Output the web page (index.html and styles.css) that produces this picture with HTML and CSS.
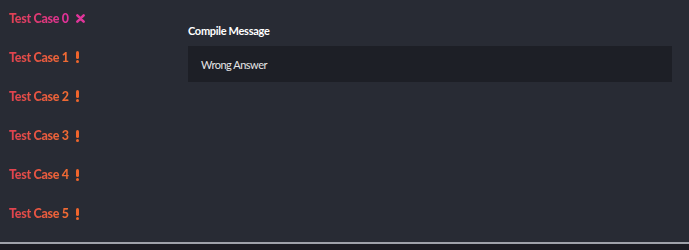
FILE: index.html
```html
<!DOCTYPE html>
<html>
<head>
<meta charset="utf-8">
<link rel="stylesheet" href="styles.css">
</head>
<body>
<div class="main">
  <ul class="cases">
    <li class="case"><span class="label fail">Test Case 0</span><svg class="xicon" viewBox="0 0 10 10" width="9" height="9"><path d="M1.5 1.5 L8.5 8.5 M8.5 1.5 L1.5 8.5" stroke="#e0359a" stroke-width="2.8" stroke-linecap="round"/></svg></li>
    <li class="case"><span class="label warn">Test Case 1</span><span class="bang"></span></li>
    <li class="case"><span class="label warn">Test Case 2</span><span class="bang"></span></li>
    <li class="case"><span class="label warn">Test Case 3</span><span class="bang"></span></li>
    <li class="case"><span class="label warn">Test Case 4</span><span class="bang"></span></li>
    <li class="case"><span class="label warn">Test Case 5</span><span class="bang"></span></li>
  </ul>
  <section class="result">
    <h3 class="title">Compile Message</h3>
    <div class="box">Wrong Answer</div>
  </section>
</div>
<div class="footer"></div>
</body>
</html>
```
FILE: styles.css
```css
html, body {
  margin: 0;
  padding: 0;
  background: #282b34;
  font-family: Lato, "Noto Sans", sans-serif;
}
.main {
  height: 242px;
  display: flex;
  background: #282b34;
}
.cases {
  list-style: none;
  margin: 0;
  padding: 9px 0 0 9px;
  width: 179px;
  box-sizing: border-box;
  display: flex;
  flex-direction: column;
  gap: 21.2px;
}
.case {
  display: flex;
  align-items: center;
  height: 18px;
  gap: 7px;
}
.label {
  font-size: 12.5px;
  font-weight: 900;
  letter-spacing: -0.3px;
  -webkit-background-clip: text;
  background-clip: text;
  color: transparent;
}
.fail {
  background-image: linear-gradient(90deg, #e04250, #e0309c);
}
.warn {
  background-image: linear-gradient(90deg, #df4150, #f06c32);
}
.xicon {
  display: block;
}
.bang {
  position: relative;
  width: 3px;
  height: 12px;
}
.bang::before {
  content: "";
  position: absolute;
  left: 0;
  top: 0;
  width: 3px;
  height: 8px;
  border-radius: 1.5px;
  background: #f0652c;
}
.bang::after {
  content: "";
  position: absolute;
  left: 0;
  top: 9px;
  width: 3px;
  height: 3px;
  border-radius: 50%;
  background: #f0652c;
}
.result {
  flex: 1;
  padding: 24px 17px 0 9px;
}
.title {
  margin: 0 0 8px 0;
  font-size: 11px;
  font-weight: 700;
  letter-spacing: -0.3px;
  color: #ffffff;
  line-height: 14px;
}
.box {
  background: #1d1f26;
  height: 36px;
  display: flex;
  align-items: center;
  padding-left: 13px;
  font-size: 11px;
  letter-spacing: -0.5px;
  color: #e6e6e6;
}
.footer {
  height: 8px;
  border-top: 2px solid #9fa2aa;
  background: #1b1c23;
}
```
